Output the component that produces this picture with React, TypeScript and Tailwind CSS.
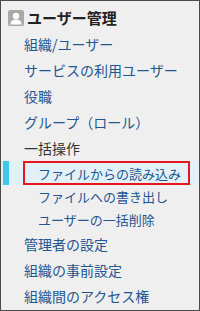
const FONT = { fontFamily: '"Meiryo", "Noto Sans CJK JP", sans-serif' };

type Item = { label: string; kind: "link" | "group" | "sub" | "current" };

const ITEMS: Item[] = [
  { label: "組織/ユーザー", kind: "link" },
  { label: "サービスの利用ユーザー", kind: "link" },
  { label: "役職", kind: "link" },
  { label: "グループ（ロール）", kind: "link" },
  { label: "一括操作", kind: "group" },
  { label: "ファイルからの読み込み", kind: "current" },
  { label: "ファイルへの書き出し", kind: "sub" },
  { label: "ユーザーの一括削除", kind: "sub" },
  { label: "管理者の設定", kind: "link" },
  { label: "組織の事前設定", kind: "link" },
  { label: "組織間のアクセス権", kind: "link" },
];

function UserIcon() {
  return (
    <svg width="16" height="16" viewBox="0 0 16 16" className="shrink-0">
      <rect x="0" y="0" width="16" height="16" rx="2" fill="#a9a9a9" />
      <circle cx="8" cy="6" r="3.2" fill="#fff" />
      <path d="M2.5 14.5 C2.5 11 5 9.6 8 9.6 C11 9.6 13.5 11 13.5 14.5 Z" fill="#fff" />
    </svg>
  );
}

export default function App() {
  return (
    <div className="w-[200px] h-[311px] bg-[#efefef] border border-[#4a4a4a] overflow-hidden" style={FONT}>
      <div className="flex flex-col pt-[3px]">
        {/* 見出し */}
        <div className="h-[27px] flex items-center pl-[7px] gap-[3px]">
          <UserIcon />
          <span className="text-[15px] font-bold text-[#222] leading-none">ユーザー管理</span>
        </div>

        {ITEMS.map((item) => {
          if (item.kind === "current") {
            return (
              <div key={item.label} className="h-[24px] flex items-stretch bg-[#e1f1f7]">
                <span className="w-[6px] ml-[2px] bg-[#3cc9ec]" />
                <div className="ml-[14px] mr-[9px] flex-1 flex items-center border-2 border-[#e8141e] pl-[13px]">
                  <span className="text-[13px] text-[#23558f] leading-none whitespace-nowrap">{item.label}</span>
                </div>
              </div>
            );
          }
          if (item.kind === "sub") {
            return (
              <div key={item.label} className="h-[23px] flex items-center pl-[37px]">
                <span className="text-[13px] text-[#23558f] leading-none whitespace-nowrap">{item.label}</span>
              </div>
            );
          }
          return (
            <div key={item.label} className="h-[26px] flex items-center pl-[23px]">
              <span
                className={
                  item.kind === "group"
                    ? "text-[14px] text-[#333] leading-none whitespace-nowrap"
                    : "text-[14px] text-[#23558f] leading-none whitespace-nowrap"
                }
              >
                {item.label}
              </span>
            </div>
          );
        })}
      </div>
    </div>
  );
}
